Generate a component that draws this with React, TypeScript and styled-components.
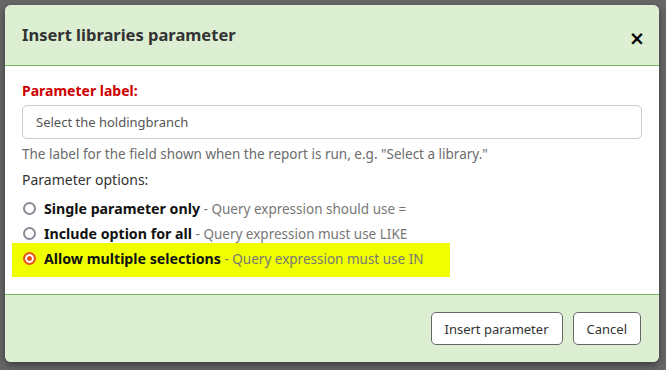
import { FC } from 'react';
import styled, { createGlobalStyle } from 'styled-components';

const GlobalStyle = createGlobalStyle`
    html, body {
        margin: 0;
        padding: 0;
        background: #686868;
        font-family: "Noto Sans", "Open Sans", sans-serif;
    }
`;

const Backdrop = styled.div`
    width: 666px;
    height: 370px;
    padding: 5px 7px 8px 5px;
    box-sizing: border-box;
    overflow: hidden;
    background: #686868;
`;

const Modal = styled.div`
    height: 357px;
    display: flex;
    flex-direction: column;
    background: #fff;
    border-radius: 6px;
    overflow: hidden;
    box-shadow: 0 3px 9px rgba(0, 0, 0, 0.45);
`;

const Header = styled.div`
    height: 60px;
    flex: none;
    display: flex;
    align-items: center;
    justify-content: space-between;
    padding: 0 14px 0 17px;
    background: #dcefd2;
    border-bottom: 1px solid #7ab55c;
`;

const Title = styled.h1`
    margin: 0 0 2px;
    font-size: 16.5px;
    font-weight: 700;
    color: #333;
`;

const Close = styled.button`
    border: none;
    background: none;
    padding: 0;
    margin-top: 6px;
    font-family: "DejaVu Sans", sans-serif;
    font-size: 19px;
    font-weight: 700;
    line-height: 1;
    color: #000;
`;

const Body = styled.div`
    flex: 1;
    padding: 15px 17px 0 17px;
`;

const FieldLabel = styled.label`
    display: block;
    font-size: 14px;
    font-weight: 700;
    color: #cc0000;
    line-height: 20px;
`;

const Input = styled.input`
    display: block;
    width: 100%;
    box-sizing: border-box;
    height: 34px;
    margin-top: 4px;
    padding: 0 13px;
    border: 1px solid #ccc;
    border-radius: 5px;
    font-family: inherit;
    font-size: 13px;
    color: #555;
`;

const Hint = styled.div`
    margin-top: 6px;
    font-size: 13.5px;
    color: #6c6c6c;
    line-height: 18px;
`;

const OptionsHeading = styled.div`
    margin-top: 7px;
    font-size: 14px;
    color: #333;
    line-height: 19px;
`;

const OptionList = styled.div`
    margin-top: 7px;
    display: flex;
    flex-direction: column;
`;

const Option = styled.label<{ $highlight?: boolean }>`
    display: flex;
    align-items: center;
    gap: 8px;
    width: 438px;
    height: 25px;
    box-sizing: content-box;
    margin-left: -10px;
    padding: 0 11px;
    line-height: 25px;

    ${p =>
        p.$highlight &&
        `
        margin-top: -3px;
        padding-top: 3px;
        padding-bottom: 6px;
        width: 416px;
        background: #f0ff00;
    `}
`;

const Radio = styled.span<{ $checked?: boolean }>`
    flex: none;
    width: 13px;
    height: 13px;
    box-sizing: border-box;
    border-radius: 50%;
    border: 2px solid ${p => (p.$checked ? '#e95420' : '#8a8a96')};
    background: ${p => (p.$checked ? '#e95420' : '#fff')};
    box-shadow: ${p => (p.$checked ? 'inset 0 0 0 2px #fff' : 'none')};
`;

const OptionName = styled.span`
    font-size: 14.2px;
    font-weight: 700;
    color: #111;
`;

const OptionNote = styled.span`
    font-size: 13.5px;
    color: #777;
`;

const Footer = styled.div`
    flex: none;
    display: flex;
    justify-content: flex-end;
    gap: 10px;
    padding: 17px 18px 17px 0;
    background: #dcefd2;
    border-top: 1px solid #7ab55c;
`;

const Button = styled.button`
    height: 33px;
    padding: 0 13px;
    background: #fff;
    border: 1px solid #666;
    border-radius: 5px;
    font-family: inherit;
    font-size: 13px;
    color: #333;
`;

const options = [
    { name: 'Single parameter only', note: 'Query expression should use =' },
    { name: 'Include option for all', note: 'Query expression must use LIKE' },
    { name: 'Allow multiple selections', note: 'Query expression must use IN', checked: true },
];

const App: FC = () => {
    return (
        <Backdrop>
            <GlobalStyle />
            <Modal>
                <Header>
                    <Title>Insert libraries parameter</Title>
                    <Close>×</Close>
                </Header>
                <Body>
                    <FieldLabel>Parameter label:</FieldLabel>
                    <Input defaultValue="Select the holdingbranch" />
                    <Hint>The label for the field shown when the report is run, e.g. "Select a library."</Hint>
                    <OptionsHeading>Parameter options:</OptionsHeading>
                    <OptionList>
                        {options.map(o => (
                            <Option key={o.name} $highlight={o.checked}>
                                <Radio $checked={o.checked} />
                                <span>
                                    <OptionName>{o.name}</OptionName>
                                    <OptionNote> - {o.note}</OptionNote>
                                </span>
                            </Option>
                        ))}
                    </OptionList>
                </Body>
                <Footer>
                    <Button>Insert parameter</Button>
                    <Button>Cancel</Button>
                </Footer>
            </Modal>
        </Backdrop>
    );
};

export default App;
